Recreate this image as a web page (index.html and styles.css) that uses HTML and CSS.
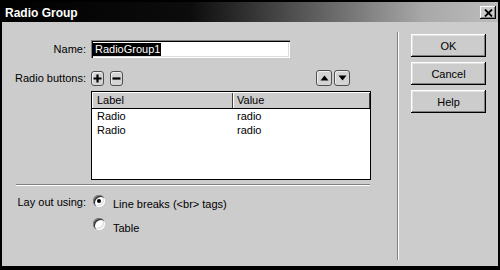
FILE: index.html
```html
<!DOCTYPE html>
<html>
<head>
<meta charset="utf-8">
<link rel="stylesheet" href="styles.css">
</head>
<body>
<div class="window">
  <div class="titlebar">
    <span class="title">Radio Group</span>
    <span class="close"><svg width="9" height="8" viewBox="0 0 9 8"><path d="M1 0.5 L8 7.5 M8 0.5 L1 7.5" stroke="#000" stroke-width="1.8" fill="none"/></svg></span>
  </div>
  <div class="main">
    <div class="form">
      <div class="row name-row">
        <span class="lbl">Name:</span>
        <div class="input"><span class="sel">RadioGroup1</span></div>
      </div>
      <div class="row btn-row">
        <span class="lbl">Radio buttons:</span>
        <div class="tools">
          <span class="ib small"><svg width="9" height="9" viewBox="0 0 9 9"><path d="M4.5 0.5 V8.5 M0.5 4.5 H8.5" stroke="#000" stroke-width="2.2"/></svg></span>
          <span class="ib small"><svg width="9" height="9" viewBox="0 0 9 9"><path d="M0.5 4.5 H8.5" stroke="#000" stroke-width="2.2"/></svg></span>
          <span class="spacer"></span>
          <span class="ib big"><svg width="9" height="6" viewBox="0 0 9 6"><path d="M4.5 0.5 L8.5 5.5 L0.5 5.5 Z" fill="#000"/></svg></span>
          <span class="ib big"><svg width="9" height="6" viewBox="0 0 9 6"><path d="M0.5 0.5 L8.5 0.5 L4.5 5.5 Z" fill="#000"/></svg></span>
        </div>
      </div>
      <div class="list">
        <div class="list-head"><div class="hc c1">Label</div><div class="hc c2">Value</div></div>
        <div class="list-row"><span class="c1">Radio</span><span class="c2">radio</span></div>
        <div class="list-row"><span class="c1">Radio</span><span class="c2">radio</span></div>
      </div>
      <div class="sep"></div>
      <div class="row radio-row first">
        <span class="lbl">Lay out using:</span>
        <span class="radio checked"></span>
        <span class="opt">Line breaks (&lt;br&gt; tags)</span>
      </div>
      <div class="row radio-row second">
        <span class="lbl"></span>
        <span class="radio"></span>
        <span class="opt">Table</span>
      </div>
    </div>
    <div class="vsep"></div>
    <div class="actions">
      <button class="btn">OK</button>
      <button class="btn">Cancel</button>
      <button class="btn">Help</button>
    </div>
  </div>
</div>
</body>
</html>
```
FILE: styles.css
```css
html, body {
  margin: 0;
  padding: 0;
  background: #000;
}
.window {
  width: 500px;
  height: 270px;
  box-sizing: border-box;
  border: 2px solid #000;
  border-bottom-width: 4px;
  background: #cccccc;
  display: flex;
  flex-direction: column;
  font-family: "Liberation Sans", Arial, sans-serif;
  font-size: 11px;
  color: #000;
}
.titlebar {
  height: 20px;
  flex: none;
  display: flex;
  align-items: center;
  padding: 1px 2px 0 3px;
  box-sizing: border-box;
  background: linear-gradient(to right, #000 0%, #0c0c0c 38%, #5a5a5a 62%, #a8a8a8 85%, #bcbcbc 100%);
}
.title {
  flex: 1;
  color: #fff;
  font-weight: bold;
  font-size: 12px;
}
.close {
  width: 16px;
  height: 13px;
  background: #cccccc;
  box-shadow: inset -1px -1px #000, inset 1px 1px #fff, inset -2px -2px #808080;
  display: flex;
  align-items: center;
  justify-content: center;
}
.main {
  flex: 1;
  display: flex;
}
.form {
  width: 395px;
  display: flex;
  flex-direction: column;
}
.row {
  display: flex;
  align-items: center;
}
.lbl {
  width: 89px;
  flex: none;
  box-sizing: border-box;
  padding-right: 5px;
  text-align: right;
}
.name-row {
  margin-top: 18px;
  height: 18px;
}
.input {
  width: 199px;
  height: 18px;
  box-sizing: border-box;
  background: #fff;
  box-shadow: inset 1px 1px #808080, inset 2px 2px #000, inset -1px -1px #fff, inset -2px -2px #dcdcdc;
  padding: 3px 0 0 2px;
  display: flex;
  align-items: flex-start;
}
.sel {
  background: #000;
  color: #fff;
  height: 13px;
  line-height: 13px;
  padding: 0 1px 0 2px;
}
.btn-row {
  margin-top: 12px;
  height: 16px;
}
.tools {
  display: flex;
  align-items: center;
  width: 259px;
}
.spacer {
  flex: 1;
}
.ib {
  box-sizing: border-box;
  border: 1px solid #505050;
  border-radius: 3px;
  background: #d4d4d4;
  box-shadow: inset 1px 1px #f0f0f0;
  display: flex;
  align-items: center;
  justify-content: center;
}
.ib.small {
  width: 13px;
  height: 15px;
  margin-right: 6px;
}
.ib.big {
  width: 16px;
  height: 16px;
  margin-left: 2px;
}
.list {
  margin: 5px 0 0 89px;
  width: 280px;
  height: 89px;
  box-sizing: border-box;
  border: 1px solid #000;
  background: #fff;
}
.list-head {
  display: flex;
  height: 16px;
  background: #cccccc;
  border-bottom: 1px solid #000;
  box-sizing: content-box;
}
.hc {
  height: 16px;
  line-height: 16px;
  box-sizing: border-box;
  box-shadow: inset 1px 1px #fff, inset -1px 0 #404040;
}
.hc.c2 {
  flex: 1;
}
.c1 {
  width: 141px;
  padding-left: 5px;
  box-sizing: border-box;
}
.c2 {
  padding-left: 4px;
}
.list-row {
  display: flex;
  height: 14px;
  line-height: 14px;
}
.sep {
  margin: 4px 0 0 14px;
  width: 354px;
  height: 0;
  border-top: 1px solid #808080;
  border-bottom: 1px solid #fff;
}
.radio-row {
  align-items: flex-start;
  height: 14px;
  line-height: 14px;
}
.radio-row.first {
  margin-top: 9px;
}
.radio-row.second {
  margin-top: 9px;
}
.radio {
  width: 12px;
  height: 12px;
  margin-left: 2px;
  margin-right: 8px;
  border-radius: 50%;
  background: #fff;
  box-shadow: inset 1px 1px #808080, inset 2px 2px #303030, inset -1px -1px #fff, inset -2px -2px #dcdcdc;
  display: flex;
  align-items: center;
  justify-content: center;
  flex: none;
}
.radio.checked::after {
  content: "";
  width: 4px;
  height: 4px;
  border-radius: 50%;
  background: #000;
}
.opt {
  margin-top: 2px;
}
.radio-row.second .opt {
  margin-top: 3px;
}
.vsep {
  width: 0;
  border-left: 1px solid #808080;
  border-right: 1px solid #fff;
  margin: 10px 0 6px 0;
}
.actions {
  padding: 12px 0 0 12px;
  display: flex;
  flex-direction: column;
  gap: 5px;
}
.btn {
  width: 75px;
  height: 23px;
  margin: 0;
  padding: 0;
  border: none;
  background: #cccccc;
  font-family: "Liberation Sans", Arial, sans-serif;
  font-size: 11px;
  color: #000;
  box-shadow: inset -1px -1px #000, inset 1px 1px #fff, inset -2px -2px #808080, inset 2px 2px #e0e0e0;
}
```
